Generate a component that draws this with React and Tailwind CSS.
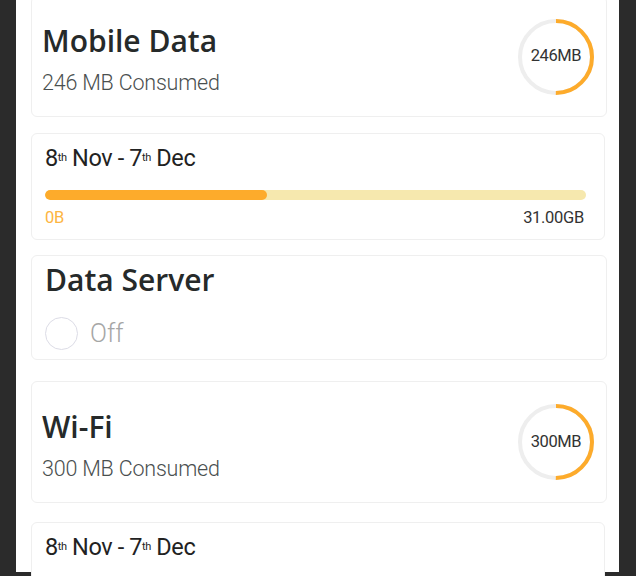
import React from "react";

function Ring({ label }) {
  // half-filled usage ring
  const r = 36;
  const c = 2 * Math.PI * r;
  return (
    <div className="relative w-[78px] h-[78px] shrink-0">
      <svg width="78" height="78" viewBox="0 0 78 78">
        <circle cx="39" cy="39" r={r} fill="none" stroke="#eeeeee" strokeWidth="4" />
        <circle
          cx="39"
          cy="39"
          r={r}
          fill="none"
          stroke="#fdab2b"
          strokeWidth="4"
          strokeDasharray={`${c / 2} ${c}`}
          transform="rotate(-90 39 39)"
        />
      </svg>
      <div className="absolute inset-0 flex items-center justify-center text-[16.5px] text-[#333] tracking-[-0.4px] font-['Roboto',sans-serif]">
        {label}
      </div>
    </div>
  );
}

function UsageCard({ title, consumed, ring, className }) {
  return (
    <div className={`flex items-center justify-between rounded-md border border-[#efefef] bg-white pl-[10px] pr-[11px] ${className}`}>
      <div className="pt-[7px]">
        <h2 className="text-[30px] leading-[34px] font-semibold text-[#262a2a] font-['Open_Sans',sans-serif]">{title}</h2>
        <p className="mt-[12px] text-[21.5px] leading-[26px] font-light text-[#4a4f4f] font-['Roboto',sans-serif] tracking-[-0.2px]">
          {consumed}
        </p>
      </div>
      <Ring label={ring} />
    </div>
  );
}

function PeriodCard({ className, fill = "41%" }) {
  return (
    <div className={`rounded-md border border-[#efefef] bg-white px-[13px] ${className}`}>
      <div className="pt-[10px] text-[23.5px] leading-[28px] text-[#222] font-['Roboto',sans-serif] tracking-[-0.4px]">
        8<sup className="text-[11px]">th</sup> Nov - 7<sup className="text-[11px]">th</sup> Dec
      </div>
      <div className="mt-[18px] mr-[5px] h-[10px] rounded-full bg-[#f6e8ae] overflow-hidden">
        <div className="h-full rounded-full bg-[#fdab2b]" style={{ width: fill }} />
      </div>
      <div className="mt-[8px] mr-[7px] flex justify-between text-[16.5px] leading-[20px] font-['Roboto',sans-serif] tracking-[-0.3px]">
        <span className="text-[#fdb542]">0B</span>
        <span className="text-[#333]">31.00GB</span>
      </div>
    </div>
  );
}

export default function App() {
  return (
    <div className="h-[576px] w-[636px] overflow-hidden bg-[#2b2b2b] pl-[16px] pr-[17px]">
      <div className="h-full bg-white pl-[15px] pr-[12px]">
        <UsageCard title="Mobile Data" consumed="246 MB Consumed" ring="246MB" className="-mt-[4px] h-[121px]" />
        <PeriodCard className="mt-[16px] h-[107px] mr-[2px]" />
        <div className="mt-[15px] h-[105px] rounded-md border border-[#efefef] bg-white px-[13px]">
          <h2 className="pt-[4px] text-[30px] leading-[40px] font-semibold text-[#262a2a] font-['Open_Sans',sans-serif]">Data Server</h2>
          <div className="mt-[17px] flex items-center gap-[12px]">
            <span className="h-[33px] w-[33px] rounded-full border-[1.5px] border-[#dcdce6]" />
            <span className="text-[25px] leading-[30px] font-light text-[#a6a6a6] font-['Roboto',sans-serif]">Off</span>
          </div>
        </div>
        <UsageCard title="Wi-Fi" consumed="300 MB Consumed" ring="300MB" className="mt-[21px] h-[122px]" />
        <PeriodCard className="mt-[19px] h-[107px] mr-[2px]" />
      </div>
    </div>
  );
}
